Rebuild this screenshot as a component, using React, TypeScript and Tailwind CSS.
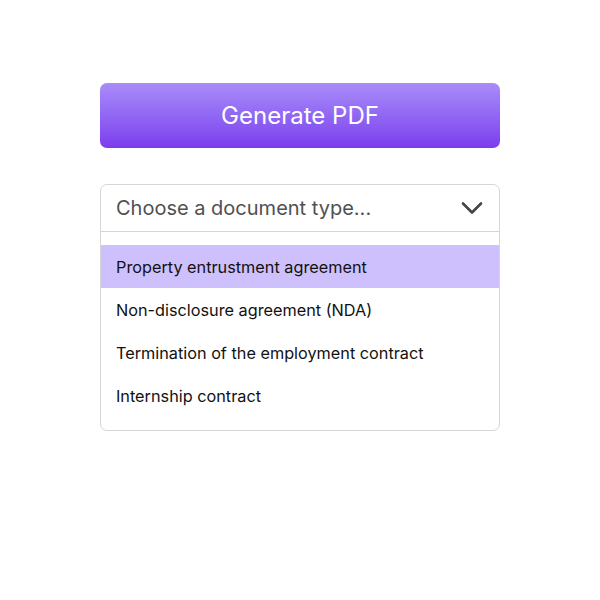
import React from 'react';

const options = [
  'Property entrustment agreement',
  'Non-disclosure agreement (NDA)',
  'Termination of the employment contract',
  'Internship contract',
];

const App = () => {
  return (
    <div className="w-[600px] h-[600px] bg-white flex flex-col items-center pt-[83px] font-['Inter',sans-serif]">
      <button className="w-[400px] h-[65px] rounded-[7px] bg-gradient-to-b from-[#a98bf9] to-[#7c3aed] text-white text-[24px] leading-none">
        Generate PDF
      </button>
      <div className="mt-[36px] w-[400px] border border-[#d6d6d6] rounded-[7px] bg-white">
        <div className="h-[47px] flex items-center justify-between pl-[15px] pr-[16px] border-b border-[#d6d6d6]">
          <span className="text-[20px] text-[#505050]">Choose a document type...</span>
          <svg width="22" height="14" viewBox="0 0 22 14" fill="none">
            <path d="M2 2.5 L11 11.5 L20 2.5" stroke="#444" strokeWidth="2.6" strokeLinecap="round" strokeLinejoin="round" />
          </svg>
        </div>
        <ul className="pt-[13px] pb-[13px]">
          {options.map((option, index) => (
            <li
              key={index}
              className={`h-[43px] flex items-center px-[15px] pt-[2px] text-[16.25px] text-[#111] ${index === 0 ? 'bg-[#cec0fc]' : ''}`}
            >
              {option}
            </li>
          ))}
        </ul>
      </div>
    </div>
  );
};

export default App;
